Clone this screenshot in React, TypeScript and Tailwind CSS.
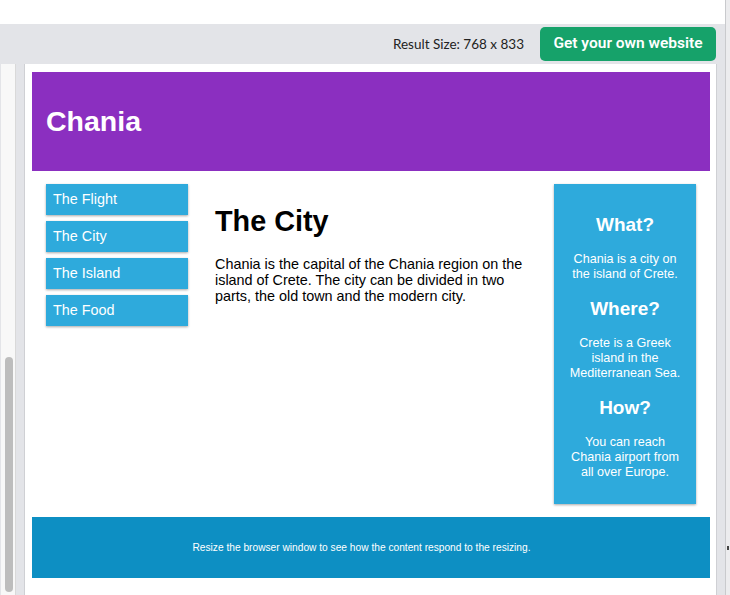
import React from 'react'

const menu = ['The Flight', 'The City', 'The Island', 'The Food']

const facts = [
  { q: 'What?', a: 'Chania is a city on the island of Crete.' },
  { q: 'Where?', a: 'Crete is a Greek island in the Mediterranean Sea.' },
  { q: 'How?', a: 'You can reach Chania airport from all over Europe.' },
]

export default function App() {
  return (
    <div className="flex h-[595px] w-[730px] overflow-hidden bg-white">
      <div className="flex w-[725px] flex-col">
        {/* blank strip above the toolbar */}
        <div className="h-[24px] bg-white" />

        {/* toolbar */}
        <div className="flex h-[40px] items-center justify-end gap-[16px] bg-[#e3e4e8] pr-[9px]">
          <span className="font-['Lato',sans-serif] text-[13.5px] text-[#222]">Result Size: 768 x 833</span>
          <button className="h-[34px] w-[176px] rounded-[5px] bg-[#16a26a] font-['Roboto',sans-serif] text-[15.5px] font-semibold text-white">
            Get your own website
          </button>
        </div>

        {/* result area */}
        <div className="flex min-h-0 flex-1 bg-[#e3e4e8]">
          <div className="ml-[1px] flex w-[15px] flex-col justify-end border-r border-[#d9d9d9] bg-[#f8f8f8] pb-[3px]">
            <div className="ml-[4px] h-[235px] w-[8px] rounded-full bg-[#bdbdbd]" />
          </div>
          <div className="ml-[8px] flex-1 border-l border-r border-[#cfd0d4] bg-white pl-[7px] pr-[6px] pt-[8px] font-['Liberation_Sans',Arial,sans-serif]">
            <header className="flex h-[99px] items-center bg-[#8b2fc0] pl-[14px]">
              <h1 className="text-[28.5px] font-bold leading-[33px] text-white">Chania</h1>
            </header>

            <div className="flex items-start px-[14px] pb-[13px] pt-[13px]">
              <nav className="flex w-[142px] flex-col gap-[6px]">
                {menu.map((m) => (
                  <div
                    key={m}
                    className="flex h-[31px] items-center bg-[#2eaadc] pl-[7px] text-[14.4px] leading-[17px] text-white shadow-[0_1px_3px_rgba(0,0,0,0.12),0_1px_2px_rgba(0,0,0,0.24)]"
                  >
                    {m}
                  </div>
                ))}
              </nav>

              <main className="flex-1 px-[27px]">
                <h1 className="mt-[21px] text-[28.8px] font-bold leading-[33px] text-black">The City</h1>
                <p className="mt-[18px] text-[14.4px] leading-[16px] text-black">
                  Chania is the capital of the Chania region on the island of Crete. The city can be divided in two
                  parts, the old town and the modern city.
                </p>
              </main>

              <aside className="w-[142px] bg-[#2eaadc] px-[13px] pb-[24px] pt-[15px] text-center text-white shadow-[0_1px_3px_rgba(0,0,0,0.12),0_1px_2px_rgba(0,0,0,0.24)]">
                {facts.map((f, i) => (
                  <div key={f.q} className={i === 0 ? 'mt-[15px]' : 'mt-[16px]'}>
                    <h2 className="text-[19px] font-bold leading-[22px]">{f.q}</h2>
                    <p className="mt-[16px] text-[12.6px] leading-[15px]">{f.a}</p>
                  </div>
                ))}
              </aside>
            </div>

            <footer className="flex h-[61px] items-center justify-center bg-[#0d8fc3] pr-[19px] text-[10.2px] leading-[12px] text-white">
              Resize the browser window to see how the content respond to the resizing.
            </footer>
          </div>
          <div className="w-[8px]" />
        </div>
      </div>

      {/* window edge */}
      <div className="w-[1px] bg-[#c9cacd]" />
      <div className="flex flex-1 flex-col bg-[#ececee]">
        <div className="ml-[1px] mt-[546px] h-[4px] w-[2px] bg-[#444]" />
      </div>
    </div>
  )
}
